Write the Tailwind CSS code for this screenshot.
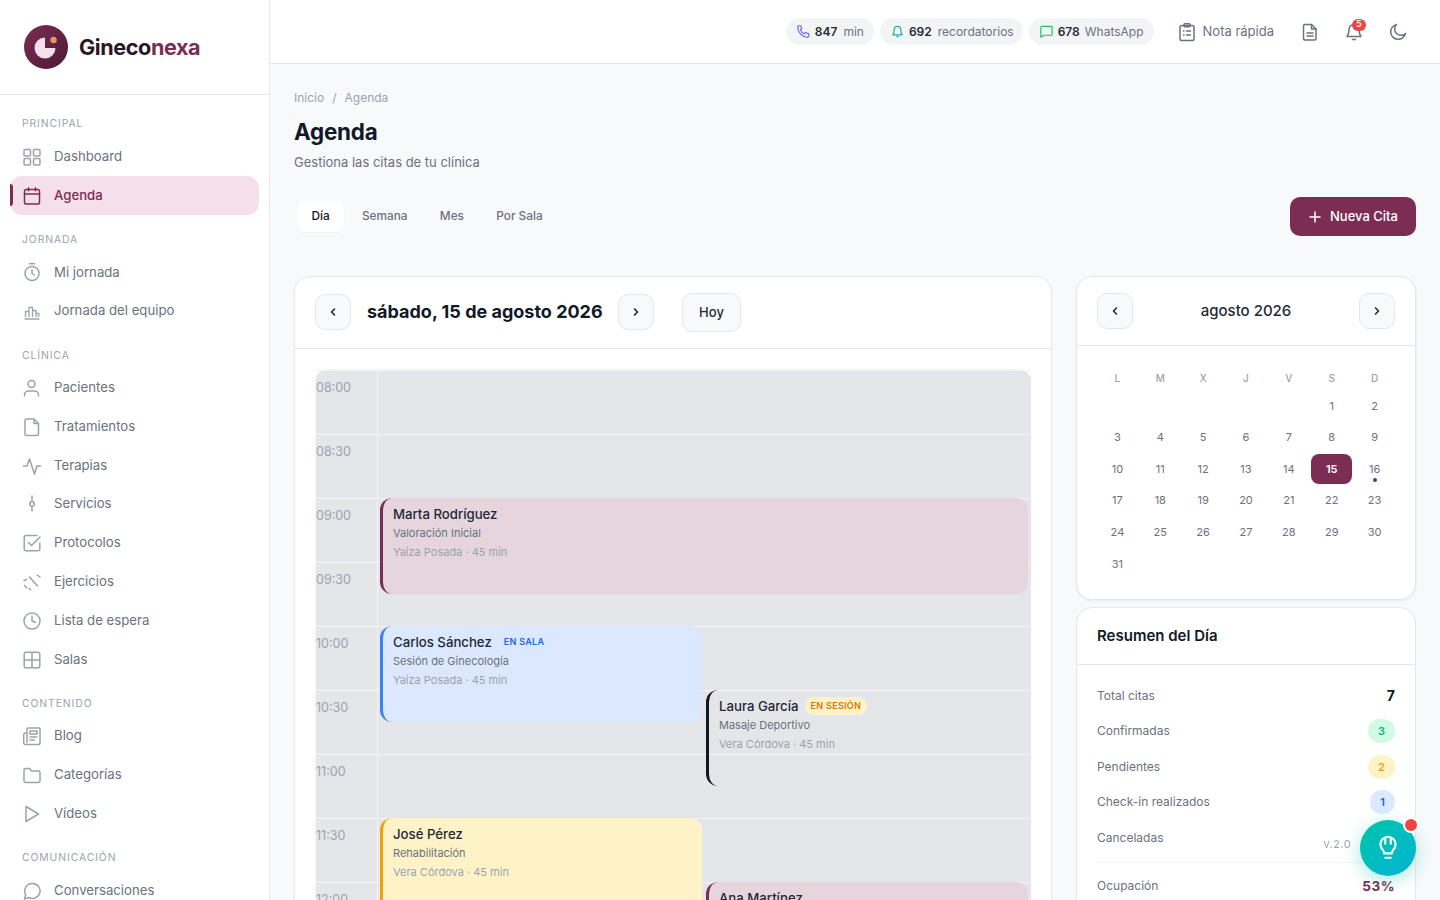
<!DOCTYPE html>
<html lang="es">
<head>
  <meta charset="UTF-8" />
  <title>Gineconexa – Agenda</title>
  <script src="https://cdn.jsdelivr.net/npm/@tailwindcss/browser@4"></script>
</head>
<body class="h-screen overflow-hidden bg-[#f8f9fb] font-['Inter',sans-serif] text-[#111827]">
<div class="flex h-[900px] overflow-hidden">

  <!-- Sidebar -->
  <aside class="w-[270px] shrink-0 h-full overflow-hidden bg-white border-r border-[#e5e7eb]">
    <div class="h-[95px] border-b border-[#e5e7eb] flex items-center pl-6 gap-[11px]">
      <svg width="44" height="44" viewBox="0 0 44 44">
        <defs><linearGradient id="logo" x1="0" y1="0" x2="1" y2="1"><stop offset="0" stop-color="#7b2d54"/><stop offset="1" stop-color="#4d1a35"/></linearGradient></defs>
        <circle cx="22" cy="22" r="22" fill="url(#logo)"/>
        <path d="M21 12.500a10.500 10.500 0 1 0 10.500 10.500H21z" fill="#f5dfeb"/>
        <circle cx="29.500" cy="15" r="3.200" fill="#e8935f"/>
      </svg>
      <div class="text-[21.6px] font-bold tracking-[-0.4px] text-[#2d1526]">Gineco<span class="text-[#7b2d54]">nexa</span></div>
    </div>
    <nav class="px-[10px] pt-[21px] text-[13.2px] text-[#6b7280]">
      <div class="h-4 mb-[5px] pl-3 text-[10.4px] leading-4 tracking-[0.9px] text-[#9ca3af]">PRINCIPAL</div>
      <a class="h-[39px] flex items-center gap-3 pl-3">
        <svg class="w-5 h-5 text-[#9ca3af]" viewBox="0 0 20 20" fill="none" stroke="currentColor" stroke-width="1.500"><rect x="2" y="2.500" width="6.500" height="6.500" rx="1.200"/><rect x="11.500" y="2.500" width="6.500" height="6.500" rx="1.200"/><rect x="2" y="11.500" width="6.500" height="6.500" rx="1.200"/><rect x="11.500" y="11.500" width="6.500" height="6.500" rx="1.200"/></svg>
        Dashboard
      </a>
      <a class="relative h-[39px] flex items-center gap-3 pl-3 rounded-xl bg-[#f5dfeb] font-medium text-[#7b2d54]">
        <span class="absolute left-0 top-2 h-[22px] w-[3px] rounded-r bg-[#7b2d54]"></span>
        <svg class="w-5 h-5" viewBox="0 0 20 20" fill="none" stroke="currentColor" stroke-width="1.500" stroke-linecap="round"><rect x="2.500" y="3.500" width="15" height="14.500" rx="1.800"/><path d="M2.500 8h15M6.500 1.800v3M13.500 1.800v3"/></svg>
        Agenda
      </a>

      <div class="mt-[17px] h-4 mb-[5px] pl-3 text-[10.4px] leading-4 tracking-[0.9px] text-[#9ca3af]">JORNADA</div>
      <a class="h-[38.8px] flex items-center gap-3 pl-3">
        <svg class="w-5 h-5 text-[#9ca3af]" viewBox="0 0 20 20" fill="none" stroke="currentColor" stroke-width="1.500" stroke-linecap="round" stroke-linejoin="round"><circle cx="10" cy="11.500" r="7"/><path d="M7.500 1.800h5M10 8v3.500l2.200 1.500"/></svg>
        Mi jornada
      </a>
      <a class="h-[38.8px] flex items-center gap-3 pl-3">
        <svg class="w-5 h-5 text-[#9ca3af]" viewBox="0 0 20 20" fill="none" stroke="currentColor" stroke-width="1.300"><path d="M3.500 16V10.500h3.500V16M7 16V6.500h3.500V16M10.500 16V9.500h3.500V16M14 16v-3.500h2.800V16M2.500 18h15"/></svg>
        Jornada del equipo
      </a>

      <div class="mt-[17px] h-4 mb-[5px] pl-3 text-[10.4px] leading-4 tracking-[0.9px] text-[#9ca3af]">CLÍNICA</div>
      <a class="h-[38.8px] flex items-center gap-3 pl-3">
        <svg class="w-5 h-5 text-[#9ca3af]" viewBox="0 0 20 20" fill="none" stroke="currentColor" stroke-width="1.500" stroke-linecap="round"><circle cx="9.500" cy="6" r="3.500"/><path d="M2.500 18v-1c0-2.500 2-4 4-4h6c2 0 4 1.500 4 4v1"/></svg>
        Pacientes
      </a>
      <a class="h-[38.8px] flex items-center gap-3 pl-3">
        <svg class="w-5 h-5 text-[#9ca3af]" viewBox="0 0 20 20" fill="none" stroke="currentColor" stroke-width="1.500" stroke-linejoin="round"><path d="M4.500 2h7.500l4.500 4.500V17a1.500 1.500 0 0 1-1.500 1.500H4.500A1.500 1.500 0 0 1 3 17V3.500A1.500 1.500 0 0 1 4.500 2z"/><path d="M12 2v4.500h4.500"/></svg>
        Tratamientos
      </a>
      <a class="h-[38.8px] flex items-center gap-3 pl-3">
        <svg class="w-5 h-5 text-[#9ca3af]" viewBox="0 0 20 20" fill="none" stroke="currentColor" stroke-width="1.500" stroke-linecap="round" stroke-linejoin="round"><path d="M1.500 10H5l2.500-7 5 15 2.500-8h3.500"/></svg>
        Terapias
      </a>
      <a class="h-[38.8px] flex items-center gap-3 pl-3">
        <svg class="w-5 h-5 text-[#9ca3af]" viewBox="0 0 20 20" fill="none" stroke="currentColor" stroke-width="1.500" stroke-linecap="round"><path d="M10 2v5.500M10 12.500V17"/><circle cx="10" cy="10" r="2.300"/></svg>
        Servicios
      </a>
      <a class="h-[38.8px] flex items-center gap-3 pl-3">
        <svg class="w-5 h-5 text-[#9ca3af]" viewBox="0 0 20 20" fill="none" stroke="currentColor" stroke-width="1.500" stroke-linecap="round" stroke-linejoin="round"><path d="M15 2.500H4A1.800 1.800 0 0 0 2.200 4.300V16A1.800 1.800 0 0 0 4 17.800h12a1.800 1.800 0 0 0 1.800-1.800v-6"/><path d="M6.500 9.500l3 3L18 4"/></svg>
        Protocolos
      </a>
      <a class="h-[38.8px] flex items-center gap-3 pl-3">
        <svg class="w-5 h-5 text-[#9ca3af]" viewBox="0 0 20 20" fill="none" stroke="currentColor" stroke-width="1.500" stroke-linecap="round"><path d="M7.500 5l8 9M2 8.500l2.500-1M15 3l3 2M2.500 13.500l2.500 2.500M7.500 16.500l1 1.500"/></svg>
        Ejercicios
      </a>
      <a class="h-[38.8px] flex items-center gap-3 pl-3">
        <svg class="w-5 h-5 text-[#9ca3af]" viewBox="0 0 20 20" fill="none" stroke="currentColor" stroke-width="1.500" stroke-linecap="round" stroke-linejoin="round"><circle cx="10" cy="10" r="8"/><path d="M10 5v5l3.500 1.500"/></svg>
        Lista de espera
      </a>
      <a class="h-[38.8px] flex items-center gap-3 pl-3">
        <svg class="w-5 h-5 text-[#9ca3af]" viewBox="0 0 20 20" fill="none" stroke="currentColor" stroke-width="1.500"><rect x="2.200" y="2.200" width="15.600" height="15.600" rx="1.800"/><path d="M10 2.200v15.600M2.200 10h15.600"/></svg>
        Salas
      </a>

      <div class="mt-[17px] h-4 mb-[5px] pl-3 text-[10.4px] leading-4 tracking-[0.9px] text-[#9ca3af]">CONTENIDO</div>
      <a class="h-[38.8px] flex items-center gap-3 pl-3">
        <svg class="w-5 h-5 text-[#9ca3af]" viewBox="0 0 20 20" fill="none" stroke="currentColor" stroke-width="1.500" stroke-linecap="round" stroke-linejoin="round"><path d="M5 16.500V3a1 1 0 0 1 1-1h11a1 1 0 0 1 1 1v14a1.500 1.500 0 0 1-1.500 1.500H3.500A1.800 1.800 0 0 1 1.700 16.700V8.500A1.500 1.500 0 0 1 3.200 7H5"/><rect x="8" y="5" width="7" height="3"/><path d="M8 11h7M8 14h4.500"/></svg>
        Blog
      </a>
      <a class="h-[38.8px] flex items-center gap-3 pl-3">
        <svg class="w-5 h-5 text-[#9ca3af]" viewBox="0 0 20 20" fill="none" stroke="currentColor" stroke-width="1.500" stroke-linejoin="round"><path d="M2 5a1.500 1.500 0 0 1 1.500-1.500h4L9.500 6h7A1.500 1.500 0 0 1 18 7.500V16a1.500 1.500 0 0 1-1.500 1.500h-13A1.500 1.500 0 0 1 2 16z"/></svg>
        Categorías
      </a>
      <a class="h-[38.8px] flex items-center gap-3 pl-3">
        <svg class="w-5 h-5 text-[#9ca3af]" viewBox="0 0 20 20" fill="none" stroke="currentColor" stroke-width="1.500" stroke-linejoin="round"><path d="M4 2.500l12.500 7.500L4 17.500z"/></svg>
        Vídeos
      </a>

      <div class="mt-[17px] h-4 mb-[5px] pl-3 text-[10.4px] leading-4 tracking-[0.9px] text-[#9ca3af]">COMUNICACIÓN</div>
      <a class="h-[38.8px] flex items-center gap-3 pl-3">
        <svg class="w-5 h-5 text-[#9ca3af]" viewBox="0 0 20 20" fill="none" stroke="currentColor" stroke-width="1.500" stroke-linejoin="round"><path d="M10.500 2.500a7.500 7.500 0 1 1-3.700 14L2.500 18l1.200-4.300A7.500 7.500 0 0 1 10.500 2.500z"/></svg>
        Conversaciones
      </a>
    </nav>
  </aside>

  <div class="flex-1 min-w-0 h-full overflow-hidden">
    <!-- Topbar -->
    <header class="h-[64px] bg-white border-b border-[#e5e7eb] flex items-center justify-end pr-[32px]">
      <div class="flex items-center gap-1.5 text-[12px]">
        <div class="h-[27px] px-2.5 rounded-full bg-[#f3f4f6] flex items-center gap-1">
          <svg class="w-[15px] h-[15px] text-[#6366f1]" viewBox="0 0 16 16" fill="none" stroke="currentColor" stroke-width="1.200" stroke-linejoin="round"><path d="M3 1.800h2l1.200 3.200-1.500 1.200c.7 2 2.300 3.600 4.300 4.300L10.200 9l3.500 1.300v2.200c0 1-.8 1.700-1.700 1.700C6.500 14 2 9 1.800 3.500 1.800 2.500 2.300 1.800 3 1.800z"/></svg>
          <b class="font-semibold text-[#1f2937]">847</b><span class="ml-0.5 text-[#6b7280]">min</span>
        </div>
        <div class="h-[27px] pl-2.5 pr-[9px] rounded-full bg-[#f3f4f6] flex items-center gap-1">
          <svg class="w-[15px] h-[15px] text-[#14b8a6]" viewBox="0 0 16 16" fill="none" stroke="currentColor" stroke-width="1.300" stroke-linejoin="round"><path d="M8 2.500a3.500 3.500 0 0 0-3.500 3.500c0 3.500-1.200 5-1.500 5.500h10c-.3-.5-1.500-2-1.500-5.500A3.500 3.500 0 0 0 8 2.500zM6.800 13.500h2.400"/></svg>
          <b class="font-semibold text-[#1f2937]">692</b><span class="ml-0.5 text-[#6b7280]">recordatorios</span>
        </div>
        <div class="h-[27px] px-2.5 rounded-full bg-[#f3f4f6] flex items-center gap-1">
          <svg class="w-[15px] h-[15px] text-[#22c55e]" viewBox="0 0 16 16" fill="none" stroke="currentColor" stroke-width="1.300" stroke-linejoin="round"><path d="M3 2.500h10a1 1 0 0 1 1 1v7.500a1 1 0 0 1-1 1H5.500L2 14V3.500a1 1 0 0 1 1-1z"/></svg>
          <b class="font-semibold text-[#1f2937]">678</b><span class="ml-[1px] text-[#6b7280]">WhatsApp</span>
        </div>
      </div>
      <div class="ml-[23px] flex items-center gap-[6px] text-[13px] text-[#6b7280]">
        <svg class="w-5 h-5" viewBox="0 0 20 20" fill="none" stroke="currentColor" stroke-width="1.500" stroke-linecap="round"><rect x="3" y="3.500" width="14" height="15" rx="1.800"/><rect x="7" y="1.800" width="6" height="3" rx="0.800"/><path d="M6.500 9h.5M9.500 9h4M6.500 13h.5M9.500 13h4"/></svg>
        Nota rápida
      </div>
      <svg class="ml-[26px] w-5 h-5 text-[#6b7280]" viewBox="0 0 20 20" fill="none" stroke="currentColor" stroke-width="1.500" stroke-linejoin="round" stroke-linecap="round"><path d="M5 2.500h6.500L16 7v9.500a1.500 1.500 0 0 1-1.500 1.500h-9.500A1.500 1.500 0 0 1 3.500 16.500V4A1.500 1.500 0 0 1 5 2.500z"/><path d="M11.500 2.500V7H16M7 11h6M7 14h6"/></svg>
      <div class="relative ml-6 w-5 h-5 text-[#6b7280]">
        <svg class="w-5 h-5" viewBox="0 0 20 20" fill="none" stroke="currentColor" stroke-width="1.500" stroke-linejoin="round" stroke-linecap="round"><path d="M10 2.500a5 5 0 0 0-5 5c0 4-1.200 6-2 7h14c-.8-1-2-3-2-7a5 5 0 0 0-5-5zM8.500 17.500h3"/></svg>
        <span class="absolute -top-[3px] left-[8px] w-[14px] h-[12px] rounded-full bg-[#ef4444] text-white text-[8.500px] font-semibold flex items-center justify-center">5</span>
      </div>
      <svg class="ml-6 w-5 h-5 text-[#6b7280]" viewBox="0 0 20 20" fill="none" stroke="currentColor" stroke-width="1.500" stroke-linejoin="round"><path d="M17.500 11.500A7.500 7.500 0 1 1 8.500 2.500a6 6 0 0 0 9 9z"/></svg>
    </header>

    <main class="px-6">
      <div class="pt-[25px] flex items-center gap-2 text-[12px] leading-[18px] text-[#9ca3af]"><span>Inicio</span><span>/</span><span>Agenda</span></div>
      <h1 class="mt-[10px] text-[22.4px] leading-[30px] font-bold tracking-[-0.2px] text-[#111827]">Agenda</h1>
      <p class="mt-[5px] text-[13px] leading-5 text-[#6b7280]">Gestiona las citas de tu clínica</p>

      <div class="mt-[25px] flex items-center justify-between">
        <div class="flex items-center pl-[3px] gap-[3.6px] text-[11.8px] text-[#6b7280] font-medium">
          <span class="h-[31px] px-[14.4px] flex items-center rounded-lg bg-white text-[#111827] shadow-[0_1px_2px_rgba(0,0,0,0.04)]">Día</span>
          <span class="h-[31px] px-[14.4px] flex items-center">Semana</span>
          <span class="h-[31px] px-[14.4px] flex items-center">Mes</span>
          <span class="h-[31px] px-[14.4px] flex items-center">Por Sala</span>
        </div>
        <button class="h-[39px] w-[126px] rounded-[10px] bg-[#7b2d54] text-white text-[13px] font-medium flex items-center justify-center gap-2">
          <svg class="w-[14px] h-[14px]" viewBox="0 0 14 14" fill="none" stroke="currentColor" stroke-width="1.500" stroke-linecap="round"><path d="M7 2v10M2 7h10"/></svg>
          Nueva Cita
        </button>
      </div>

      <div class="mt-[40px] flex items-start gap-6">
        <!-- Day calendar -->
        <section class="w-[758px] shrink-0 bg-white border border-[#e5e7eb] rounded-2xl shadow-[0_1px_3px_rgba(0,0,0,0.04)]">
          <div class="h-[72px] border-b border-[#e5e7eb] flex items-center pl-5">
            <button class="mb-[2px] w-9 h-9 rounded-[10px] border border-[#e5e7eb] bg-[#f8f9fb] flex items-center justify-center">
              <svg class="w-3.5 h-3.5" viewBox="0 0 14 14" fill="none" stroke="#1f2937" stroke-width="1.600" stroke-linecap="round" stroke-linejoin="round"><path d="M8.500 4L5.500 7l3 3"/></svg>
            </button>
            <h2 class="mb-[2px] ml-4 w-[235px] text-[18px] font-bold whitespace-nowrap text-[#111827]">sábado, 15 de agosto 2026</h2>
            <button class="mb-[2px] ml-4 w-9 h-9 rounded-[10px] border border-[#e5e7eb] bg-[#f8f9fb] flex items-center justify-center">
              <svg class="w-3.5 h-3.5" viewBox="0 0 14 14" fill="none" stroke="#1f2937" stroke-width="1.600" stroke-linecap="round" stroke-linejoin="round"><path d="M5.500 4l3 3-3 3"/></svg>
            </button>
            <button class="ml-7 w-[59px] h-[39px] rounded-[10px] border border-[#e5e7eb] bg-[#f8f9fb] text-[13px] font-medium text-[#1f2937]">Hoy</button>
          </div>

          <div class="px-5 pt-5 pb-5">
            <div class="relative w-[716px] rounded-t-xl border-t border-l border-[#f3f4f6] bg-[#e5e6ea]">
              <div class="h-[64px] flex border-t border-[#f3f4f6]"><div class="w-[62px] pt-[8px] border-r border-[#f3f4f6] text-[12.5px] text-[#9ca3af]">08:00</div></div>
              <div class="h-[64px] flex border-t border-[#f3f4f6]"><div class="w-[62px] pt-[8px] border-r border-[#f3f4f6] text-[12.5px] text-[#9ca3af]">08:30</div></div>
              <div class="h-[64px] flex border-t border-[#f3f4f6]"><div class="w-[62px] pt-[8px] border-r border-[#f3f4f6] text-[12.5px] text-[#9ca3af]">09:00</div></div>
              <div class="h-[64px] flex border-t border-[#f3f4f6]"><div class="w-[62px] pt-[8px] border-r border-[#f3f4f6] text-[12.5px] text-[#9ca3af]">09:30</div></div>
              <div class="h-[64px] flex border-t border-[#f3f4f6]"><div class="w-[62px] pt-[8px] border-r border-[#f3f4f6] text-[12.5px] text-[#9ca3af]">10:00</div></div>
              <div class="h-[64px] flex border-t border-[#f3f4f6]"><div class="w-[62px] pt-[8px] border-r border-[#f3f4f6] text-[12.5px] text-[#9ca3af]">10:30</div></div>
              <div class="h-[64px] flex border-t border-[#f3f4f6]"><div class="w-[62px] pt-[8px] border-r border-[#f3f4f6] text-[12.5px] text-[#9ca3af]">11:00</div></div>
              <div class="h-[64px] flex border-t border-[#f3f4f6]"><div class="w-[62px] pt-[8px] border-r border-[#f3f4f6] text-[12.5px] text-[#9ca3af]">11:30</div></div>
              <div class="h-[64px] flex border-t border-[#f3f4f6]"><div class="w-[62px] pt-[8px] border-r border-[#f3f4f6] text-[12.5px] text-[#9ca3af]">12:00</div></div>

              <!-- appointments -->
              <div class="absolute left-[64px] top-[128px] w-[648px] h-[96px] rounded-xl border-l-[3px] border-[#7b2d54] bg-[#e6d5dd] pl-[10px] pt-[6px]">
                <div class="text-[13.2px] leading-5 font-medium text-[#1f2937]">Marta Rodríguez</div>
                <div class="text-[11px] leading-[18px] text-[#6b7280]">Valoración Inicial</div>
                <div class="mt-[1px] text-[11px] leading-[18px] text-[#9ca3af]">Yaiza Posada · 45 min</div>
              </div>
              <div class="absolute left-[64px] top-[256px] w-[322px] h-[96px] rounded-xl border-l-[3px] border-[#3b82f6] bg-[#dbe8fe] pl-[10px] pt-[6px]">
                <div class="flex items-center gap-3 text-[13.2px] leading-5 font-medium text-[#1f2937]">Carlos Sánchez <span class="text-[9px] font-semibold tracking-[0.3px] text-[#2563eb]">EN SALA</span></div>
                <div class="text-[11px] leading-[18px] text-[#6b7280]">Sesión de Ginecología</div>
                <div class="mt-[1px] text-[11px] leading-[18px] text-[#9ca3af]">Yaiza Posada · 45 min</div>
              </div>
              <div class="absolute left-[390px] top-[320px] w-[322px] h-[96px] rounded-xl border-l-[3px] border-[#111827] pl-[10px] pt-[6px]">
                <div class="flex items-center gap-[6px] text-[13.2px] leading-5 font-medium text-[#1f2937]">Laura García <span class="h-[18px] px-[6px] rounded-full bg-[#fef3c7] flex items-center text-[9px] font-semibold tracking-[0.3px] text-[#d97706]">EN SESIÓN</span></div>
                <div class="text-[11px] leading-[18px] text-[#6b7280]">Masaje Deportivo</div>
                <div class="mt-[1px] text-[11px] leading-[18px] text-[#9ca3af]">Vera Córdova · 45 min</div>
              </div>
              <div class="absolute left-[64px] top-[448px] w-[322px] h-[96px] rounded-xl border-l-[3px] border-[#f59e0b] bg-[#fef3c7] pl-[10px] pt-[6px]">
                <div class="text-[13.2px] leading-5 font-medium text-[#1f2937]">José Pérez</div>
                <div class="text-[11px] leading-[18px] text-[#6b7280]">Rehabilitación</div>
                <div class="mt-[1px] text-[11px] leading-[18px] text-[#9ca3af]">Vera Córdova · 45 min</div>
              </div>
              <div class="absolute left-[390px] top-[512px] w-[322px] h-[96px] rounded-xl border-l-[3px] border-[#7b2d54] bg-[#e6d5dd] pl-[10px] pt-[6px]">
                <div class="text-[13.2px] leading-5 font-medium text-[#1f2937]">Ana Martínez</div>
              </div>
            </div>
          </div>
        </section>

        <!-- Right column -->
        <div class="w-[340px] shrink-0 flex flex-col gap-[7px]">
          <section class="h-[324px] bg-white border border-[#e5e7eb] rounded-2xl shadow-[0_1px_3px_rgba(0,0,0,0.06)]">
            <div class="h-[69px] border-b border-[#e5e7eb] flex items-center justify-between px-5">
              <button class="w-9 h-9 rounded-[10px] border border-[#e5e7eb] bg-[#f8f9fb] flex items-center justify-center">
                <svg class="w-3.5 h-3.5" viewBox="0 0 14 14" fill="none" stroke="#1f2937" stroke-width="1.600" stroke-linecap="round" stroke-linejoin="round"><path d="M8.500 4L5.500 7l3 3"/></svg>
              </button>
              <div class="text-[15px] font-medium text-[#1f2937]">agosto 2026</div>
              <button class="w-9 h-9 rounded-[10px] border border-[#e5e7eb] bg-[#f8f9fb] flex items-center justify-center">
                <svg class="w-3.5 h-3.5" viewBox="0 0 14 14" fill="none" stroke="#1f2937" stroke-width="1.600" stroke-linecap="round" stroke-linejoin="round"><path d="M5.500 4l3 3-3 3"/></svg>
              </button>
            </div>
            <div class="pl-5 pt-[21px] w-[318px] grid grid-cols-7 grid-rows-[22px_repeat(6,30px)] gap-x-[2px] gap-y-[1.6px] text-[11px] text-[#6b7280] text-center leading-[30px]">
              <div class="leading-[22px] text-[10px] font-medium text-[#9ca3af]">L</div><div class="leading-[22px] text-[10px] font-medium text-[#9ca3af]">M</div><div class="leading-[22px] text-[10px] font-medium text-[#9ca3af]">X</div><div class="leading-[22px] text-[10px] font-medium text-[#9ca3af]">J</div><div class="leading-[22px] text-[10px] font-medium text-[#9ca3af]">V</div><div class="leading-[22px] text-[10px] font-medium text-[#9ca3af]">S</div><div class="leading-[22px] text-[10px] font-medium text-[#9ca3af]">D</div>
              <div></div><div></div><div></div><div></div><div></div><div>1</div><div>2</div>
              <div>3</div><div>4</div><div>5</div><div>6</div><div>7</div><div>8</div><div>9</div>
              <div>10</div><div>11</div><div>12</div><div>13</div><div>14</div><div class="rounded-lg bg-[#7b2d54] text-white font-semibold">15</div><div class="relative">16<span class="absolute left-1/2 -translate-x-1/2 bottom-[2px] w-1 h-1 rounded-full bg-[#7b2d54]"></span></div>
              <div>17</div><div>18</div><div>19</div><div>20</div><div>21</div><div>22</div><div>23</div>
              <div>24</div><div>25</div><div>26</div><div>27</div><div>28</div><div>29</div><div>30</div>
              <div>31</div>
            </div>
          </section>

          <section class="bg-white border border-[#e5e7eb] rounded-2xl h-[400px] text-[12px] text-[#6b7280]">
            <div class="h-[57px] border-b border-[#e5e7eb] flex items-center px-5 text-[15px] font-semibold text-[#111827]">Resumen del Día</div>
            <div class="px-5 pt-[13px]">
              <div class="h-[35.500px] flex items-center justify-between">Total citas <b class="text-[14px] font-bold text-[#111827]">7</b></div>
              <div class="h-[35.500px] flex items-center justify-between">Confirmadas <span class="w-[27px] h-6 rounded-full bg-[#d1fae5] flex items-center justify-center text-[11px] font-semibold text-[#10b981]">3</span></div>
              <div class="h-[35.500px] flex items-center justify-between">Pendientes <span class="w-[27px] h-6 rounded-full bg-[#fef3c7] flex items-center justify-center text-[11px] font-semibold text-[#f59e0b]">2</span></div>
              <div class="h-[35.500px] flex items-center justify-between">Check-in realizados <span class="w-[25px] h-6 rounded-full bg-[#dbeafe] flex items-center justify-center text-[11px] font-semibold text-[#2563eb]">1</span></div>
              <div class="h-[35.500px] flex items-center justify-between">Canceladas</div>
              <div class="mt-[6px] border-t border-[#f3f4f6] pt-[6px]">
                <div class="h-[35.500px] flex items-center justify-between">Ocupación <b class="text-[13.6px] font-bold tracking-[0.5px] text-[#7b2d54]">53%</b></div>
              </div>
            </div>
          </section>
        </div>
      </div>
    </main>
  </div>
</div>

<!-- Floating help -->
<span class="fixed right-[89px] bottom-[48px] text-[11px] tracking-[0.4px] text-[#9ca3af]">v.2.0</span>
<button class="fixed right-6 bottom-6 w-14 h-14 rounded-full bg-linear-to-br from-[#00c4a7] to-[#00b4d8] shadow-[0_4px_18px_rgba(0,196,167,0.35)] flex items-center justify-center">
  <svg class="w-[26px] h-[26px]" viewBox="0 0 24 24" fill="none" stroke="white" stroke-width="2" stroke-linecap="round" stroke-linejoin="round"><path d="M8.500 17c0-1.500-.5-2.300-1.500-3.500a7 7 0 1 1 10 0c-1 1.200-1.500 2-1.500 3.500zM9.500 21h5M9.500 3.500V8M14.500 3.500V8"/></svg>
  <span class="absolute top-[-1px] right-[-1px] w-3 h-3 rounded-full bg-[#ef4444] ring-2 ring-white"></span>
</button>
</body>
</html>
